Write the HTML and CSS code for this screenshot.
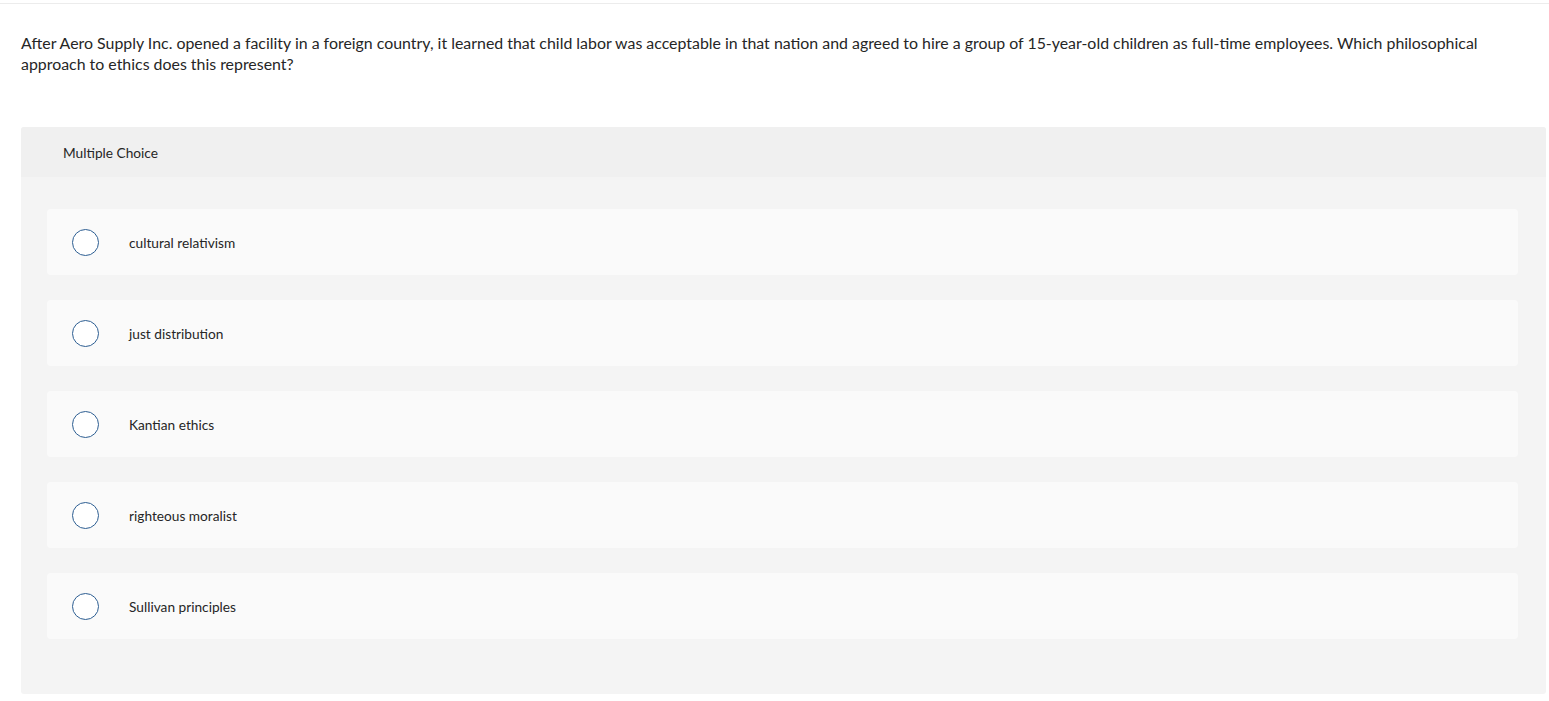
FILE: index.html
```html
<!DOCTYPE html>
<html lang="en">
<head>
<meta charset="utf-8">
<title>Multiple Choice</title>
<link rel="stylesheet" href="styles.css">
</head>
<body>
<div class="topbar"></div>
<main class="page">
  <p class="question">After Aero Supply Inc. opened a facility in a foreign country, it learned that child labor was acceptable in that nation and agreed to hire a group of 15-year-old children as full-time employees. Which philosophical approach to ethics does this represent?</p>
  <section class="panel">
    <div class="panel-head">Multiple Choice</div>
    <div class="options">
      <label class="option"><span class="radio"></span><span class="label">cultural relativism</span></label>
      <label class="option"><span class="radio"></span><span class="label">just distribution</span></label>
      <label class="option"><span class="radio"></span><span class="label">Kantian ethics</span></label>
      <label class="option"><span class="radio"></span><span class="label">righteous moralist</span></label>
      <label class="option"><span class="radio"></span><span class="label">Sullivan principles</span></label>
    </div>
  </section>
</main>
</body>
</html>
```
FILE: styles.css
```css
html, body {
  margin: 0;
  padding: 0;
  background: #ffffff;
}
body {
  font-family: "Lato", "Liberation Sans", sans-serif;
  color: #262626;
}
.topbar {
  height: 3px;
  border-bottom: 1px solid #ececec;
}
.page {
  padding: 0 3px 0 21px;
}
.question {
  margin: 0;
  padding-top: 28px;
  font-size: 15.9px;
  line-height: 21px;
  max-width: 1470px;
}
.panel {
  margin-top: 53px;
  background: #f4f4f4;
  border-radius: 3px;
  padding-bottom: 55px;
}
.panel-head {
  height: 50px;
  display: flex;
  align-items: center;
  padding-left: 42px;
  background: #f0f0f0;
  font-size: 13.7px;
  border-radius: 3px 3px 0 0;
}
.options {
  padding: 32px 28px 0 26px;
  display: flex;
  flex-direction: column;
  gap: 25px;
}
.option {
  height: 66px;
  display: flex;
  align-items: center;
  background: #fafafa;
  border-radius: 4px;
  padding-left: 25px;
}
.radio {
  width: 25px;
  height: 25px;
  border: 1.5px solid #2d5e92;
  border-radius: 50%;
  background: #fff;
  flex: none;
}
.label {
  margin-left: 30px;
  font-size: 13.7px;
}
```
